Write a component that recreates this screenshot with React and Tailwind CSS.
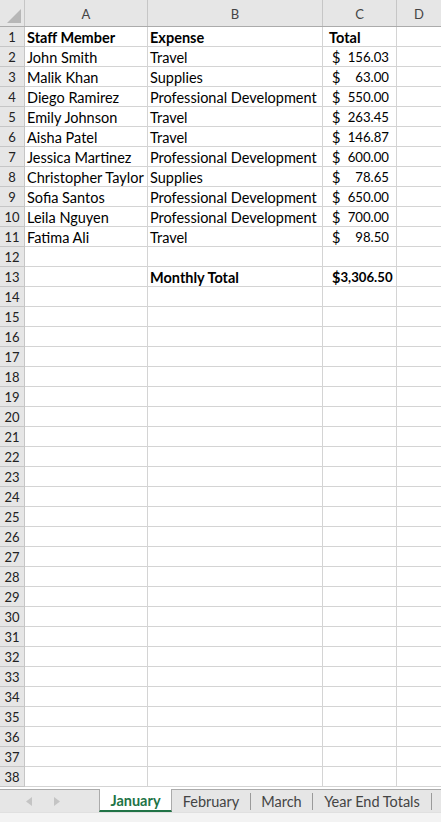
import React from "react";

const rows = [
  { a: "Staff Member", b: "Expense", c: "Total", head: true },
  { a: "John Smith", b: "Travel", c: "156.03" },
  { a: "Malik Khan", b: "Supplies", c: "63.00" },
  { a: "Diego Ramirez", b: "Professional Development", c: "550.00" },
  { a: "Emily Johnson", b: "Travel", c: "263.45" },
  { a: "Aisha Patel", b: "Travel", c: "146.87" },
  { a: "Jessica Martinez", b: "Professional Development", c: "600.00" },
  { a: "Christopher Taylor", b: "Supplies", c: "78.65" },
  { a: "Sofia Santos", b: "Professional Development", c: "650.00" },
  { a: "Leila Nguyen", b: "Professional Development", c: "700.00" },
  { a: "Fatima Ali", b: "Travel", c: "98.50" },
  {},
  { a: "", b: "Monthly Total", c: "3,306.50", total: true },
];

const allRows = Array.from({ length: 38 }, (_, i) => rows[i] || {});

const App = () => {
  return (
    <div
      className="w-[441px] h-[822px] overflow-hidden bg-white flex flex-col text-black"
      style={{ fontFamily: "Lato, 'Open Sans', sans-serif" }}
    >
      {/* Column headers */}
      <div className="flex h-[27px] shrink-0 bg-[#e6e6e6] border-b border-[#ababab] text-[13px] text-[#444]">
        <div className="w-[25px] border-r border-[#c6c6c6] relative">
          <div className="absolute right-[3px] bottom-[3px] w-0 h-0 border-l-[14px] border-l-transparent border-b-[14px] border-b-[#b7b7b7]" />
        </div>
        <div className="w-[123px] border-r border-[#c6c6c6] flex items-end justify-center pb-[2px]">A</div>
        <div className="w-[175px] border-r border-[#c6c6c6] flex items-end justify-center pb-[2px]">B</div>
        <div className="w-[74px] border-r border-[#c6c6c6] flex items-end justify-center pb-[2px]">C</div>
        <div className="flex-1 flex items-end justify-center pb-[2px]">D</div>
      </div>

      {/* Grid rows */}
      <div className="flex-1 overflow-hidden">
        {allRows.map((r, i) => (
          <div key={i} className="flex h-[20px] text-[14.5px] leading-[17px]">
            <div className="w-[25px] shrink-0 bg-[#e6e6e6] border-r border-b border-[#c6c6c6] pt-[2px] text-[13px] text-[#222] text-center">
              {i + 1}
            </div>
            <div
              className={`w-[123px] shrink-0 border-r border-b border-[#d4d4d4] pt-[2px] pl-[2px] whitespace-nowrap ${
                r.head ? "font-bold" : ""
              }`}
            >
              {r.a}
            </div>
            <div
              className={`w-[175px] shrink-0 border-r border-b border-[#d4d4d4] pt-[2px] pl-[2px] whitespace-nowrap ${
                r.head || r.total ? "font-bold" : ""
              }`}
            >
              {r.b}
            </div>
            <div
              className={`w-[74px] shrink-0 border-r border-b border-[#d4d4d4] pt-[2px] whitespace-nowrap ${
                r.head || r.total ? "font-bold" : ""
              }`}
            >
              {r.head ? (
                <span className="pl-[6px]">{r.c}</span>
              ) : r.c ? (
                <div className="flex justify-between pl-[9px] pr-[7px]">
                  <span>$</span>
                  <span className="text-[13.2px]">{r.c}</span>
                </div>
              ) : null}
            </div>
            <div className="flex-1 border-b border-[#d4d4d4]" />
          </div>
        ))}
      </div>

      {/* Sheet tabs */}
      <div className="h-[33px] shrink-0 flex flex-col">
        <div className="h-[23px] flex bg-[#e6e6e6] border-t border-[#ababab] text-[14.5px] text-[#444]">
          <div className="w-[99px] flex items-center gap-[22px] pl-[26px] text-[#c4c4c4]">
            <svg width="6" height="9" viewBox="0 0 6 9">
              <path d="M6 0 L0 4.5 L6 9 Z" fill="currentColor" />
            </svg>
            <svg width="6" height="9" viewBox="0 0 6 9">
              <path d="M0 0 L6 4.5 L0 9 Z" fill="currentColor" />
            </svg>
          </div>
          <div className="w-[73px] -mt-px bg-white border-x border-[#ababab] border-b-[2px] border-b-[#217346] flex items-center justify-center pt-[3px] font-bold text-[#217346]">
            January
          </div>
          <div className="w-[78px] flex items-center justify-center pt-[2px]">
            <span>February</span>
          </div>
          <div className="w-px h-[17px] bg-[#9a9a9a] self-center" />
          <div className="w-[61px] flex items-center justify-center pt-[2px]">March</div>
          <div className="w-px h-[17px] bg-[#9a9a9a] self-center" />
          <div className="w-[118px] flex items-center justify-center pt-[2px]">Year End Totals</div>
          <div className="w-px h-[17px] bg-[#9a9a9a] self-center" />
        </div>
        <div className="flex-1 bg-[#f3f3f3] border-t border-[#e0e0e0]" />
      </div>
    </div>
  );
};

export default App;
